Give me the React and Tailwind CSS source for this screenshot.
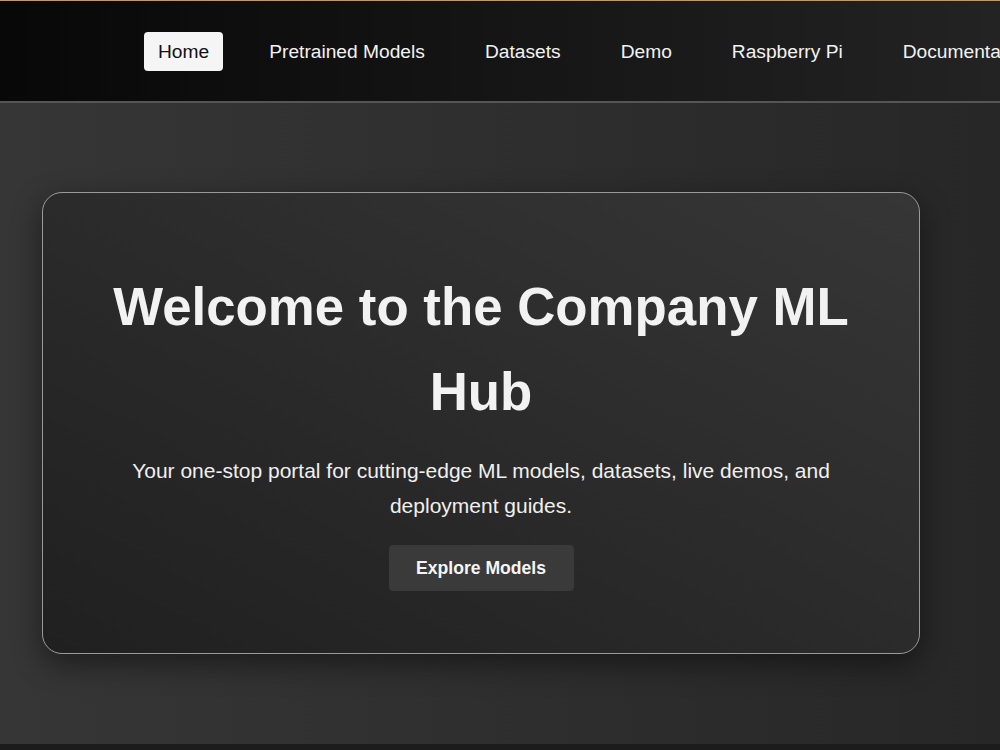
const links = ["Home", "Pretrained Models", "Datasets", "Demo", "Raspberry Pi", "Documentation"];

export default function App() {
  return (
    <div className="min-h-screen bg-[#1c1c1c] font-['Liberation_Sans',Arial,sans-serif] text-white overflow-hidden">
      <header className="h-[103px] border-t border-[#b89a78] border-b-2 border-b-[#555] bg-gradient-to-r from-[#080808] to-[#232323]">
        <nav className="flex items-center h-full pl-[144px] gap-8 whitespace-nowrap">
          {links.map((l, i) => (
            <a
              key={l}
              className={
                i === 0
                  ? "px-[14px] py-[5px] leading-[29px] rounded bg-[#f5f5f5] text-[#111] text-[19.2px]"
                  : "px-[14px] py-[5px] leading-[29px] text-[#f2f2f2] text-[19.2px]"
              }
            >
              {l}
            </a>
          ))}
        </nav>
      </header>

      <main className="h-[641px] pt-[89px] bg-gradient-to-r from-[#363636] to-[#272727]">
        <section className="ml-[42px] w-[878px] h-[462px] rounded-[20px] border border-[#9a9a9a] bg-gradient-to-tr from-[#202020] to-[#363636] shadow-[0_10px_30px_rgba(0,0,0,0.45)] flex flex-col items-center px-12 pt-[71px]">
          <h1 className="text-[52.8px] leading-[85px] font-bold text-center text-[#f2f2f2]">
            Welcome to the Company ML Hub
          </h1>
          <p className="mt-[19px] text-[21px] leading-[35px] text-center text-[#f0f0f0] max-w-[740px]">
            Your one-stop portal for cutting-edge ML models, datasets, live demos, and deployment guides.
          </p>
          <button className="mt-[22px] w-[185px] h-[46px] rounded bg-[#3a3a3a] text-[17.6px] font-bold text-[#f5f5f5]">
            Explore Models
          </button>
        </section>
      </main>
    </div>
  );
}
